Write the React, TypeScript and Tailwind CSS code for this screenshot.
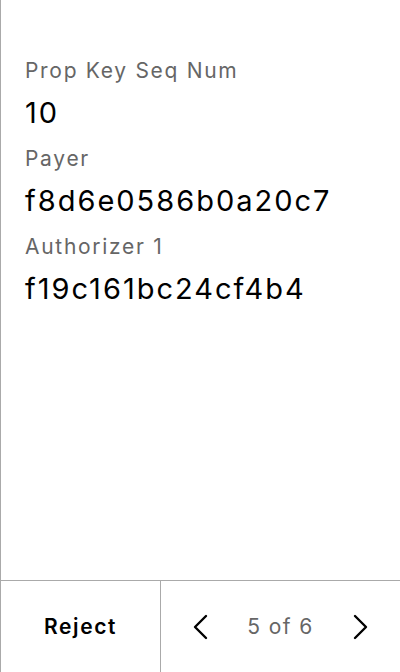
import React from "react";

const rows = [
  { label: "Prop Key Seq Num", value: "10" },
  { label: "Payer", value: "f8d6e0586b0a20c7" },
  { label: "Authorizer 1", value: "f19c161bc24cf4b4" },
];

export default function App() {
  return (
    <div
      className="w-[400px] h-[672px] flex flex-col bg-white border-l border-[#aaaaaa]"
      style={{ fontFamily: "Inter, 'Noto Sans', sans-serif" }}
    >
      <div className="flex-1 px-6 pt-[57px] flex flex-col">
        {rows.map((r) => (
          <div key={r.label} className="flex flex-col mb-[4px]">
            <div className="text-[21px] leading-[28px] tracking-[1.7px] text-[#666666]">{r.label}</div>
            <div className="text-[29px] leading-[56px] tracking-[2px] text-black">{r.value}</div>
          </div>
        ))}
      </div>
      <div className="h-[92px] flex border-t border-[#aaaaaa]">
        <div className="w-[159px] flex items-center justify-center text-[21px] font-semibold tracking-[1.6px] text-black">
          Reject
        </div>
        <div className="flex-1 flex items-center justify-between border-l border-[#aaaaaa] pl-[30px] pr-[30px]">
          <svg width="20" height="28" viewBox="0 0 20 28" fill="none" stroke="black" strokeWidth="2.4" strokeLinecap="round" strokeLinejoin="round">
            <path d="M15 3 L4 14 L15 25" />
          </svg>
          <div className="text-[21px] tracking-[1.4px] text-[#666666]">5 of 6</div>
          <svg width="20" height="28" viewBox="0 0 20 28" fill="none" stroke="black" strokeWidth="2.4" strokeLinecap="round" strokeLinejoin="round">
            <path d="M5 3 L16 14 L5 25" />
          </svg>
        </div>
      </div>
    </div>
  );
}
